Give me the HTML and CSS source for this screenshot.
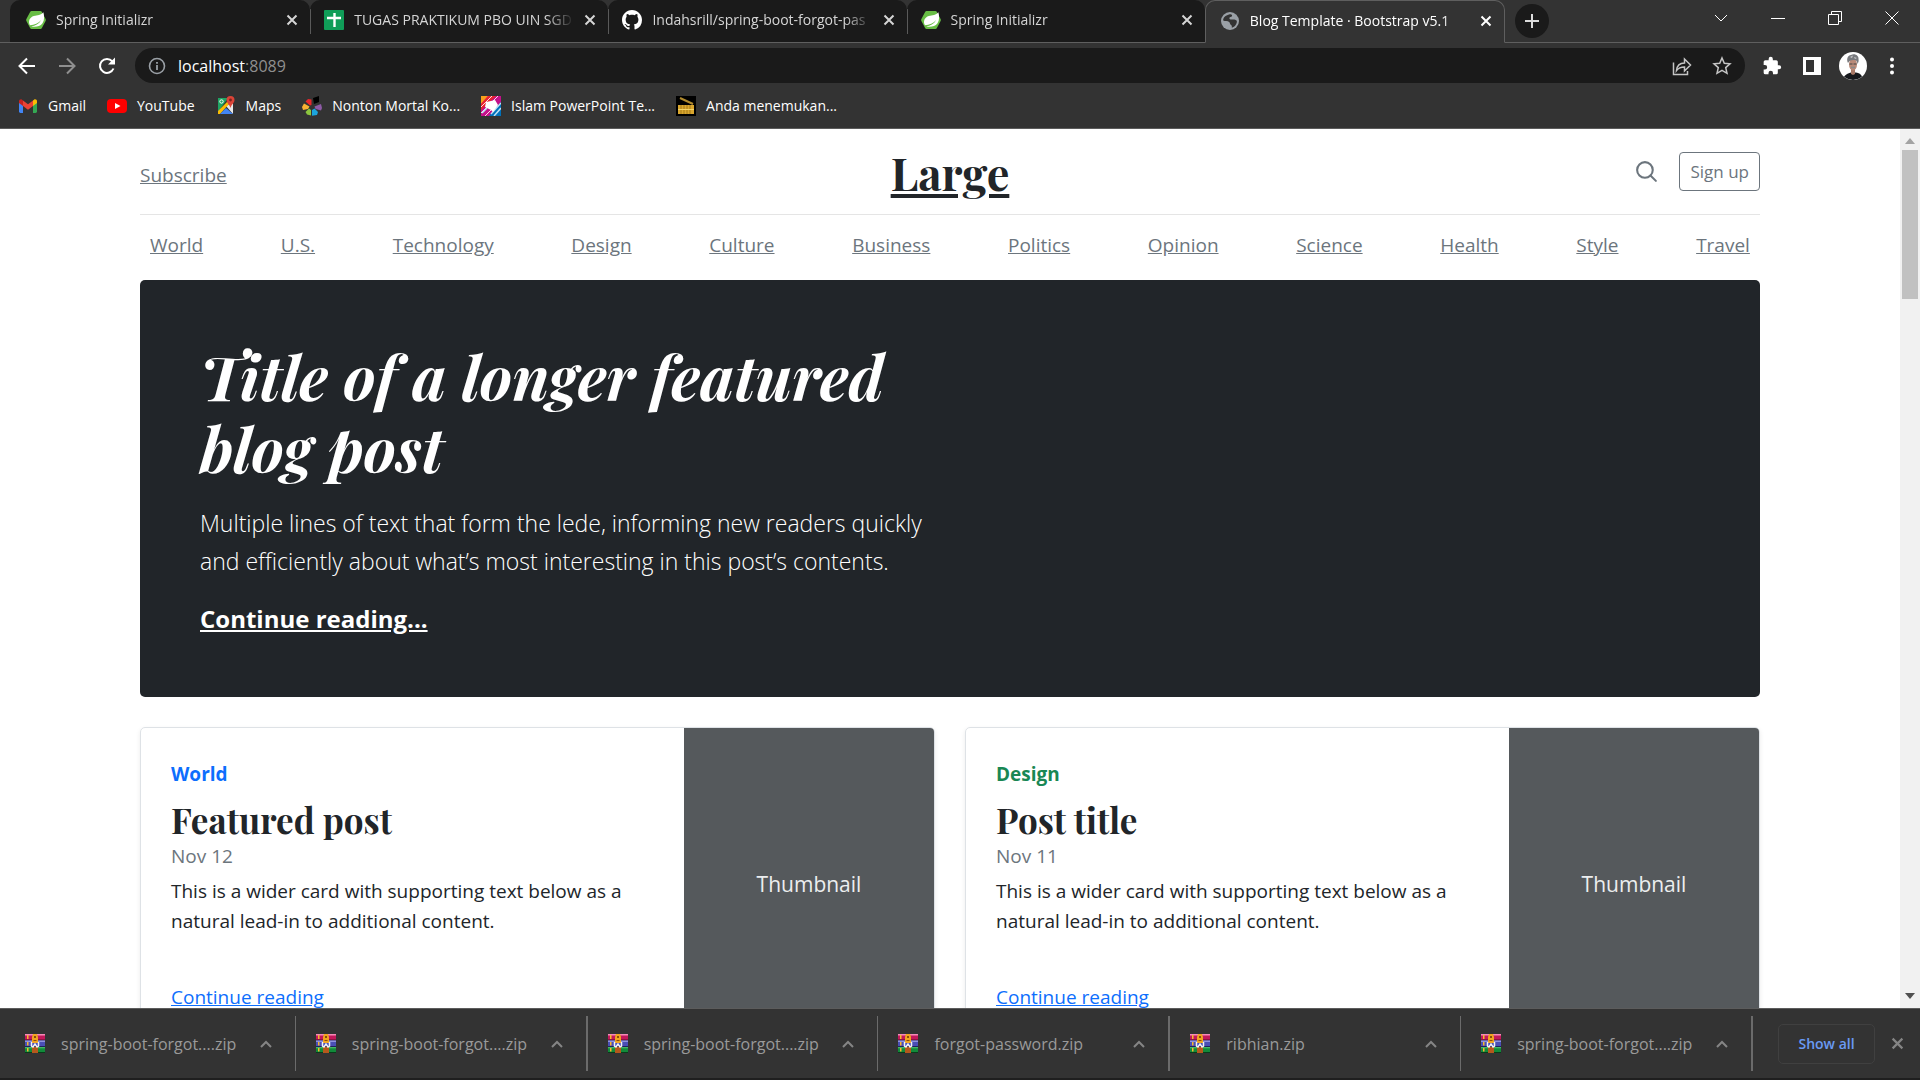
FILE: index.html
```html
<!DOCTYPE html>
<html lang="en">
<head>
<meta charset="utf-8">
<title>Blog Template · Bootstrap v5.1</title>
<link rel="stylesheet" href="styles.css">
</head>
<body>
<svg class="defs" aria-hidden="true">
  <symbol id="spring" viewBox="0 0 20 20"><path fill="#68bd45" d="M5.6 1h8.8q1 0 1.5.9l3.7 7.2q.5.9 0 1.8l-3.7 7.2q-.5.9-1.5.9H5.6q-1 0-1.5-.9L.4 10.9q-.5-.9 0-1.8l3.7-7.2q.5-.9 1.5-.9z"/><path fill="#fff" d="M17.4 2.2c.9 3.600 1.200 8-.9 11-2.500 3.500-7 3.800-11.300 3.200 4-.4 7.800-2.400 10-6.400-3 3.500-6.600 4.900-11.300 5.200C1.800 11.400 3.700 7.200 7.800 6c3.600-1 7.200-.6 9.600-3.800z"/></symbol>
  <symbol id="close" viewBox="0 0 12 12"><path d="M1.500 1.500l9 9M10.500 1.500l-9 9" fill="none" stroke="currentColor" stroke-width="2"/></symbol>
  <symbol id="winrar" viewBox="0 0 20 20">
    <path fill="#c2185b" d="M0 0h20v6H0z"/><path fill="#f58ab8" d="M0 0h20v1.500H0z"/><path fill="#5a0a2c" d="M0 5.500h20v1H0z"/>
    <path fill="#4a4fb5" d="M0 6.500h20v6H0z"/><path fill="#8f92e0" d="M0 6.500h20V8H0z"/><path fill="#20205e" d="M0 12h20v1H0z"/>
    <path fill="#128a3a" d="M0 13h20v5H0z"/><path fill="#45b864" d="M0 13h20v1.300H0z"/><path fill="#063d1a" d="M0 18h20v1H0z"/>
    <path fill="#f5b82e" d="M2 1h1.500v4H2zM2 8h1.500v3.500H2zM2 14h1.500v3.500H2z"/>
    <path fill="#b5581c" d="M7 13h6v6H7z"/><path fill="#f2a51f" d="M8 0h4l1 3v6H7V3z"/><path fill="#8a4d0c" d="M9 2h2v2H9zM8.500 6h3v1h-3z"/>
    <path d="M6.500 8v4l1.500 1 2-3 2 3 1.500-1V8" fill="none" stroke="#f4f4f4" stroke-width="1.500"/>
  </symbol>
  <symbol id="up" viewBox="0 0 12 8"><path d="M1 7l5-5 5 5" fill="none" stroke="currentColor" stroke-width="2"/></symbol>
</svg>

<header class="browser">
  <div class="tabstrip">
    <div class="tabs">
      <div class="tab"><svg class="fav"><use href="#spring"/></svg><span class="tab-title">Spring Initializr</span><button class="x" aria-label="Close tab"><svg><use href="#close"/></svg></button></div>
      <div class="tab"><svg class="fav" viewBox="0 0 20 20"><rect width="20" height="20" rx="1" fill="#109d58"/><path d="M10.500 3v14M3 8h14" stroke="#fff" stroke-width="2.400"/></svg><span class="tab-title">TUGAS PRAKTIKUM PBO UIN SGD</span><button class="x" aria-label="Close tab"><svg><use href="#close"/></svg></button></div>
      <div class="tab"><svg class="fav" viewBox="0 0 16 16"><path fill="#fff" d="M8 0C3.580 0 0 3.580 0 8c0 3.540 2.290 6.530 5.470 7.590.4.070.55-.17.55-.38 0-.19-.01-.82-.01-1.490-2.010.37-2.530-.49-2.690-.94-.09-.23-.48-.94-.82-1.130-.28-.15-.68-.52-.01-.53.63-.01 1.080.58 1.230.82.72 1.210 1.870.87 2.330.66.070-.52.28-.87.51-1.070-1.780-.2-3.640-.89-3.640-3.950 0-.87.31-1.590.82-2.150-.08-.2-.36-1.020.08-2.120 0 0 .67-.21 2.200.82.64-.18 1.320-.27 2-.27s1.360.09 2 .27c1.530-1.040 2.200-.82 2.200-.82.44 1.100.16 1.920.08 2.120.51.56.82 1.270.82 2.150 0 3.070-1.870 3.750-3.650 3.950.29.25.54.73.54 1.480 0 1.070-.01 1.930-.01 2.200 0 .21.15.46.55.38A8.010 8.010 0 0 0 16 8c0-4.420-3.580-8-8-8z"/></svg><span class="tab-title">Indahsrill/spring-boot-forgot-pas</span><button class="x" aria-label="Close tab"><svg><use href="#close"/></svg></button></div>
      <div class="tab"><svg class="fav"><use href="#spring"/></svg><span class="tab-title">Spring Initializr</span><button class="x" aria-label="Close tab"><svg><use href="#close"/></svg></button></div>
      <div class="tab active"><svg class="fav" viewBox="0 0 20 20"><circle cx="10" cy="10" r="9" fill="#9aa0a6"/><path fill="#333" d="M9 3.500c2-1 3.500.3 3 1.500s-2.400.8-2.600 2 1.200 1.700 3 1.500 3.300.2 4.400 1.300c.4 3-1.800 6.200-5 7 .3-1.700-.2-2.400-1-3-1-.8-.6-2-1.600-2.800C7.600 9.900 5 10.500 3.200 9.600 3 6.500 5.500 4.400 9 3.500z"/></svg><span class="tab-title">Blog Template · Bootstrap v5.1</span><button class="x" aria-label="Close tab"><svg><use href="#close"/></svg></button></div>
    </div>
    <button class="newtab" aria-label="New tab"><svg viewBox="0 0 16 16"><path d="M8 1v14M1 8h14" stroke="#dcdcdc" stroke-width="2"/></svg></button>
    <div class="winctl">
      <button aria-label="Search tabs"><svg viewBox="0 0 14 14"><path d="M1 4l6 6 6-6"/></svg></button>
      <button aria-label="Minimize"><svg viewBox="0 0 14 14"><path d="M0 7.500h14"/></svg></button>
      <button aria-label="Restore"><svg viewBox="0 0 14 14"><path d="M.5 3.500h10v10H.5zM3.500 3.500v-3h10v10h-3"/></svg></button>
      <button aria-label="Close"><svg viewBox="0 0 14 14"><path d="M.5.5l13 13M13.500.5l-13 13"/></svg></button>
    </div>
  </div>

  <div class="toolbar">
    <div class="nav-btns">
      <button aria-label="Back"><svg viewBox="0 0 20 20"><path d="M18 10H3M10 2.500L2.500 10l7.500 7.500"/></svg></button>
      <button class="dim" aria-label="Forward"><svg viewBox="0 0 20 20"><path d="M2 10h15M10 2.500l7.500 7.500-7.500 7.500"/></svg></button>
      <button aria-label="Reload"><svg viewBox="0 0 20 20"><path d="M16.500 12.500A7 7 0 1 1 15.300 5.300L17 7"/><path d="M18 1.500V8.500H11z" fill="#fff" stroke="none"/></svg></button>
    </div>
    <div class="omnibox">
      <svg class="info" viewBox="0 0 18 18"><circle cx="9" cy="9" r="7.500" fill="none" stroke="#9aa0a6" stroke-width="1.600"/><path d="M9 8v5M9 5v1.800" stroke="#9aa0a6" stroke-width="1.800"/></svg>
      <div class="url">localhost<span>:8089</span></div>
      <button aria-label="Share"><svg viewBox="0 0 20 20"><path d="M1.500 6.500v12h14v-3.500M4.500 14.500c.5-5 3-7.500 8-7.500V3l6 6-6 6v-4c-4 0-6 .8-8 3.500z"/></svg></button>
      <button aria-label="Bookmark"><svg viewBox="0 0 20 20"><path d="M10 2l2.300 5.300 5.700.5-4.300 3.800 1.300 5.700-5-3-5 3 1.300-5.700L2 7.800l5.700-.5z"/></svg></button>
    </div>
    <div class="actions">
      <button aria-label="Extensions"><svg viewBox="0 0 24 24"><path fill="#fff" d="M20.500 11H19V7a2 2 0 0 0-2-2h-4V3.500a2.500 2.500 0 0 0-5 0V5H4a2 2 0 0 0-2 2v3.800h1.500a2.700 2.700 0 0 1 0 5.400H2V20a2 2 0 0 0 2 2h3.800v-1.500a2.700 2.700 0 0 1 5.400 0V22H17a2 2 0 0 0 2-2v-4h1.500a2.500 2.500 0 0 0 0-5z"/></svg></button>
      <button aria-label="Side panel"><svg viewBox="0 0 20 20"><path fill="#fff" fill-rule="evenodd" d="M1 1h18v18H1zM4 4v12h8V4z"/></svg></button>
      <button class="avatar" aria-label="Profile"><svg viewBox="0 0 28 28"><circle cx="14" cy="14" r="14" fill="#fff"/><path fill="#16181c" d="M5 24.600C7 22 10 21 12 20.500h5c3 .5 5 1.500 6 4.100A14 14 0 0 1 5 24.600z"/><path fill="#a87866" d="M12 16h4v6l-2 1-2-1z"/><ellipse cx="14" cy="12.500" rx="4" ry="6" fill="#b98a78"/><path fill="#77797d" d="M9 11c-2-4 0-8 3-8 4-2 8 1 7.500 4 .5 2-.3 4-1 5-.5-3-1-4-3-4s-4 0-5 1z"/><path fill="#c9cacc" d="M11 5l3-1.500L13 6zM15 5l3 1-2 1z"/><path d="M10.500 12h3M14.500 12h3" stroke="#444" stroke-width="1.200"/><path d="M12 15.500h4" stroke="#8a8a8a" stroke-width="1.500"/></svg></button>
      <button aria-label="Menu"><svg viewBox="0 0 20 20"><g fill="#fff"><circle cx="10" cy="3.500" r="2"/><circle cx="10" cy="10" r="2"/><circle cx="10" cy="16.500" r="2"/></g></svg></button>
    </div>
  </div>

  <nav class="bookmarks" aria-label="Bookmarks">
    <a href="#"><svg viewBox="0 0 20 20"><path fill="#4285f4" d="M1 5l4 3v9H2.400Q1 17 1 15.600z"/><path fill="#34a853" d="M19 5l-4 3v9h2.600q1.400 0 1.400-1.400z"/><path fill="#fbbc04" d="M15 4.500l1-.8c1.200-.9 3-.1 3 1.500V7l-4 3z"/><path fill="#c5221f" d="M5 4.500l-1-.8C2.800 2.800 1 3.600 1 5.200V7l4 3z"/><path fill="#ea4335" d="M5 4.500l5 3.800 5-3.800V10l-5 3.700L5 10z"/></svg>Gmail</a>
    <a href="#"><svg viewBox="0 0 20 20"><rect y="3" width="20" height="14" rx="4" fill="#f00"/><path fill="#fff" d="M8 7l5.500 3L8 13z"/></svg>YouTube</a>
    <a href="#"><svg viewBox="0 0 20 20"><path fill="#1fa463" d="M2 2h10l-10 14z"/><path fill="#e8e8e8" d="M17 6v12L10 10z"/><path fill="#fbbc04" d="M2 18V15l10-10 2 2L4 18z"/><path fill="#4285f4" d="M4 18l6-6 7 6z"/><circle cx="5.500" cy="5.500" r="1.700" fill="none" stroke="#fff"/><path fill="#db4437" d="M14.500 0a4 4 0 0 1 4 4c0 3-3 4-4 8-1-4-4-5-4-8a4 4 0 0 1 4-4z"/><circle cx="14.500" cy="4" r="1.400" fill="#7b231e"/></svg>Maps</a>
    <a href="#"><svg viewBox="0 0 20 20"><path fill="#000" d="M11 2l6-2v6l-5 2z"/><path fill="#e8272c" d="M3.500 5.500L6 3l3.500.5V9L8 9.500z"/><path fill="#f9b233" d="M0 11l2-3.500 5.500 3L6 13l-5 1z"/><path fill="#8e5ba6" d="M19 8l1 4-1 2.500-5.500-1.500-1-2.500z"/><path fill="#8cc63f" d="M3.500 16l3.500-3.500 2 1.500v5.500L5 18.500z"/><path fill="#1ba5dd" d="M10 14l2.500-1.500L16 16l-1 3-5 .8z"/></svg>Nonton Mortal Ko...</a>
    <a href="#"><svg viewBox="0 0 20 20"><path fill="#c4108a" d="M0 0h20v20H0z"/><path fill="#f9a11b" d="M0 0h7L0 8z"/><path fill="#e8252f" d="M7 0h8L0 14V8z"/><path fill="#0072bc" d="M20 6v14H8z"/><path d="M0 11L11 0M0 17L17 0M4 20l6-6" stroke="#ffd9e4"/><path d="M1 17l5-5M13 20l7-8M10 18l10-11" stroke="#bfe3f5" stroke-width="1.500"/><path fill="#fff" d="M5 6l5-1 4-1 3 5-5 7-2-2-6-3z"/></svg>Islam PowerPoint Te...</a>
    <a href="#"><svg viewBox="0 0 20 20"><path fill="#000" d="M0 0h20v20H0z"/><path d="M4 2l13 6" stroke="#b08a2e" stroke-width="2"/><path fill="#d9a62e" d="M2 9h16v9H2z"/><path d="M5 9v9M8 9v9M11 9v9M14 9v9" stroke="#a47a18"/><path fill="#f4d469" d="M2 13h16v1H2z"/></svg>Anda menemukan...</a>
  </nav>
</header>

<div class="viewport">
  <div class="page">
    <div class="container">
      <header class="masthead">
        <a class="subscribe" href="#">Subscribe</a>
        <a class="logo" href="#">Large</a>
        <div class="tools">
          <a href="#" aria-label="Search"><svg viewBox="0 0 24 24"><circle cx="10.500" cy="10.500" r="7.500"/><path d="M21 21l-5.200-5.200"/></svg></a>
          <button class="signup">Sign up</button>
        </div>
      </header>
      <nav class="topics">
        <a href="#">World</a><a href="#">U.S.</a><a href="#">Technology</a><a href="#">Design</a><a href="#">Culture</a><a href="#">Business</a><a href="#">Politics</a><a href="#">Opinion</a><a href="#">Science</a><a href="#">Health</a><a href="#">Style</a><a href="#">Travel</a>
      </nav>
      <main>
        <section class="hero">
          <div class="hero-text">
            <h1>Title of a longer featured blog post</h1>
            <p class="lead">Multiple lines of text that form the lede, informing new readers quickly and efficiently about what’s most interesting in this post’s contents.</p>
            <p class="more"><a href="#">Continue reading...</a></p>
          </div>
        </section>
        <div class="cards">
          <article class="card">
            <div class="card-body">
              <strong class="cat blue">World</strong>
              <h3>Featured post</h3>
              <div class="date">Nov 12</div>
              <p>This is a wider card with supporting text below as a natural lead-in to additional content.</p>
              <a href="#">Continue reading</a>
            </div>
            <div class="thumb">Thumbnail</div>
          </article>
          <article class="card">
            <div class="card-body">
              <strong class="cat green">Design</strong>
              <h3>Post title</h3>
              <div class="date">Nov 11</div>
              <p>This is a wider card with supporting text below as a natural lead-in to additional content.</p>
              <a href="#">Continue reading</a>
            </div>
            <div class="thumb">Thumbnail</div>
          </article>
        </div>
      </main>
    </div>
  </div>
  <div class="scrollbar" aria-hidden="true">
    <svg class="arrow off" viewBox="0 0 10 6"><path d="M0 6l5-6 5 6z"/></svg>
    <div class="track"><div class="thumb-bar"></div></div>
    <svg class="arrow" viewBox="0 0 10 6"><path d="M0 0l5 6 5-6z"/></svg>
  </div>
</div>

<footer class="downloads">
  <div class="items">
    <div class="item"><svg class="zip"><use href="#winrar"/></svg><span>spring-boot-forgot....zip</span><button aria-label="Options"><svg><use href="#up"/></svg></button></div>
    <div class="item"><svg class="zip"><use href="#winrar"/></svg><span>spring-boot-forgot....zip</span><button aria-label="Options"><svg><use href="#up"/></svg></button></div>
    <div class="item"><svg class="zip"><use href="#winrar"/></svg><span>spring-boot-forgot....zip</span><button aria-label="Options"><svg><use href="#up"/></svg></button></div>
    <div class="item"><svg class="zip"><use href="#winrar"/></svg><span>forgot-password.zip</span><button aria-label="Options"><svg><use href="#up"/></svg></button></div>
    <div class="item"><svg class="zip"><use href="#winrar"/></svg><span>ribhian.zip</span><button aria-label="Options"><svg><use href="#up"/></svg></button></div>
    <div class="item"><svg class="zip"><use href="#winrar"/></svg><span>spring-boot-forgot....zip</span><button aria-label="Options"><svg><use href="#up"/></svg></button></div>
  </div>
  <button class="showall">Show all</button>
  <button class="bar-close" aria-label="Close"><svg><use href="#close"/></svg></button>
</footer>
</body>
</html>
```
FILE: styles.css
```css
* { box-sizing: border-box; }
body {
  margin: 0;
  height: 100vh;
  display: flex;
  flex-direction: column;
  overflow: hidden;
  background: #fff;
  color: #212529;
  font: 19px/30px "Open Sans", "Noto Sans", sans-serif;
}
h1, h3, p { margin: 0; }
button { padding: 0; border: 0; background: none; color: inherit; font: inherit; }
svg { display: block; flex: none; }
.defs { position: absolute; width: 0; height: 0; }

/* Browser frame */
.browser { flex: none; background: #333; color: #fff; font-size: 14px; border-bottom: 1px solid #5c5c5c; }
.tabstrip { display: flex; align-items: stretch; height: 43px; border-bottom: 1px solid #5f5f5f; }
.tabs { display: flex; flex: 0 0 auto; width: 1505px; max-width: 80%; min-width: 0; padding-left: 10px; margin-bottom: -1px; }
.tab {
  flex: 1 1 0;
  min-width: 0;
  display: flex;
  align-items: center;
  padding: 0 10px 2px 16px;
  background: #1a1a1a;
  border-radius: 10px 10px 0 0;
  border-bottom: 1px solid #5f5f5f;
  color: #d5d5d5;
  line-height: 20px;
}
.tab + .tab { background: linear-gradient(#5a5a5a, #5a5a5a) 0 9px / 1px 25px no-repeat #1a1a1a; padding-left: 14px; }
.tab.active, .tab + .tab.active { background: #333; border: 1px solid #5f5f5f; border-bottom-color: #333; color: #fff; }
.fav { width: 20px; height: 20px; }
.tab-title {
  flex: 1;
  min-width: 0;
  margin: 0 8px 0 10px;
  overflow: hidden;
  white-space: nowrap;
  -webkit-mask-image: linear-gradient(to left, transparent, #000 28px);
  mask-image: linear-gradient(to left, transparent, #000 28px);
}
.x { width: 16px; height: 16px; display: grid; place-items: center; }
.x svg { width: 12px; height: 12px; }
.newtab { align-self: center; width: 34px; height: 34px; margin-left: 10px; border-radius: 50%; background: #1a1a1a; display: grid; place-items: center; flex: none; }
.newtab svg { width: 16px; height: 16px; }
.winctl { display: flex; margin-left: auto; }
.winctl button { width: 57px; display: grid; place-items: center; padding-bottom: 6px; }
.winctl svg { width: 14px; height: 14px; fill: none; stroke: #fff; stroke-width: 1; }

.toolbar { display: flex; align-items: center; height: 45px; padding: 0 18px 0 14px; }
.nav-btns { display: flex; gap: 20px; padding: 0 18px 0 3px; }
.nav-btns svg { width: 20px; height: 20px; fill: none; stroke: #fff; stroke-width: 2; }
.nav-btns .dim { opacity: .45; }
.omnibox { flex: 1; display: flex; align-items: center; height: 35px; padding: 0 13px; border-radius: 18px; background: #1a1a1a; gap: 20px; }
.omnibox svg { width: 20px; height: 20px; fill: none; stroke: #c5c5c5; stroke-width: 1.500; }
.omnibox .info { width: 18px; height: 18px; }
.url { flex: 1; margin-left: -8px; font-size: 16px; }
.url span { color: #8f8f8f; }
.actions { display: flex; align-items: center; padding-left: 17px; gap: 20px; }
.actions svg { width: 20px; height: 20px; }
.actions .avatar svg { width: 28px; height: 28px; }
.actions .avatar { margin: 0 -5px 0 -3px; }

.bookmarks { display: flex; align-items: center; height: 40px; padding: 0 18px 4px; gap: 21px; }
.bookmarks a { display: flex; align-items: center; gap: 10px; color: #fff; text-decoration: none; white-space: nowrap; }
.bookmarks svg { width: 20px; height: 20px; }

/* Page */
.viewport { flex: 1; min-height: 0; display: flex; overflow: hidden; }
.page { flex: 1; min-width: 0; overflow: hidden; }
.container { max-width: 1650px; margin: 0 auto; padding: 0 15px; }
.masthead { display: grid; grid-template-columns: 1fr 1fr 1fr; align-items: center; height: 86px; border-bottom: 1px solid #e5e5e5; }
.subscribe { color: #6c757d; padding-top: 6px; }
.logo { justify-self: center; font: 700 45px/54px "Playfair Display", "Liberation Serif", serif; color: #212529; }
.tools { display: flex; justify-content: flex-end; align-items: center; gap: 20px; }
.tools a { color: #6c757d; }
.tools svg { width: 25px; height: 25px; fill: none; stroke: currentColor; stroke-width: 2; stroke-linecap: round; }
.signup { padding: 0 10px; height: 39px; border: 1px solid #6c757d; border-radius: 4px; color: #6c757d; font-size: 17px; }
.topics { display: flex; justify-content: space-between; padding: 15px 10px 20px; }
.topics a { color: #6c757d; }

.hero { padding: 60px; margin-bottom: 30px; border-radius: 5px; background: #212529; color: #fff; }
.hero-text { width: 50%; }
.hero h1 { font: italic 700 61px/72px "Playfair Display", "Liberation Serif", serif; }
.lead { margin: 20px 0; font-size: 23px; line-height: 38px; font-weight: 300; }
.more { font-size: 24px; line-height: 37px; font-weight: 700; }
.more a { color: #fff; }

.cards { display: grid; grid-template-columns: 1fr 1fr; gap: 30px; }
.card { display: flex; min-height: 314px; border: 1px solid #dee2e6; border-radius: 5px; overflow: hidden; box-shadow: 0 2px 5px rgba(0, 0, 0, .08); }
.card-body { flex: 1; display: flex; flex-direction: column; align-items: flex-start; padding: 31px 30px 28px; }
.cat { margin-bottom: 10px; }
.blue { color: #0d6efd; }
.green { color: #198754; }
.card h3 { font: 700 35px/42px "Playfair Display", "Liberation Serif", serif; }
.date { margin-bottom: 5px; color: #6c757d; }
.card p { margin-bottom: auto; }
.card a { color: #0d6efd; }
.thumb { flex: none; width: 250px; display: grid; place-items: center; background: #55595c; color: #eceeef; font-size: 21px; }

.scrollbar { flex: none; width: 20px; display: flex; flex-direction: column; align-items: center; padding: 9px 0; background: #f1f1f1; }
.arrow { width: 10px; height: 6px; fill: #505050; }
.arrow.off { fill: #a3a3a3; }
.track { flex: 1; width: 100%; padding: 6px 2px; }
.thumb-bar { height: 149px; background: #c1c1c1; }

/* Download shelf */
.downloads { flex: none; display: flex; align-items: center; height: 72px; background: #333; border-top: 1px solid #5c5c5c; border-bottom: 2px solid #1f1f1f; color: #9a9a9a; font-size: 16px; }
.items { display: flex; flex: 0 1 1753px; min-width: 0; padding-left: 5px; }
.item { flex: 1 1 0; min-width: 0; display: flex; align-items: center; height: 55px; padding: 0 23px 0 20px; border-right: 1px solid #6b6b6b; white-space: nowrap; }
.item:nth-child(even) { border-right-width: 2px; }
.item span { flex: 1; padding-left: 16px; }
.item button, .bar-close { color: #858585; }
.item svg { width: 12px; height: 8px; }
.item .zip { width: 20px; height: 20px; }
.showall { width: 97px; height: 40px; margin-left: 25px; border: 1px solid #404040; border-radius: 5px; color: #6a9bf4; font-size: 14px; font-weight: 600; flex: none; }
.bar-close { margin-left: 16px; }
.bar-close svg { width: 13px; height: 13px; }
```
